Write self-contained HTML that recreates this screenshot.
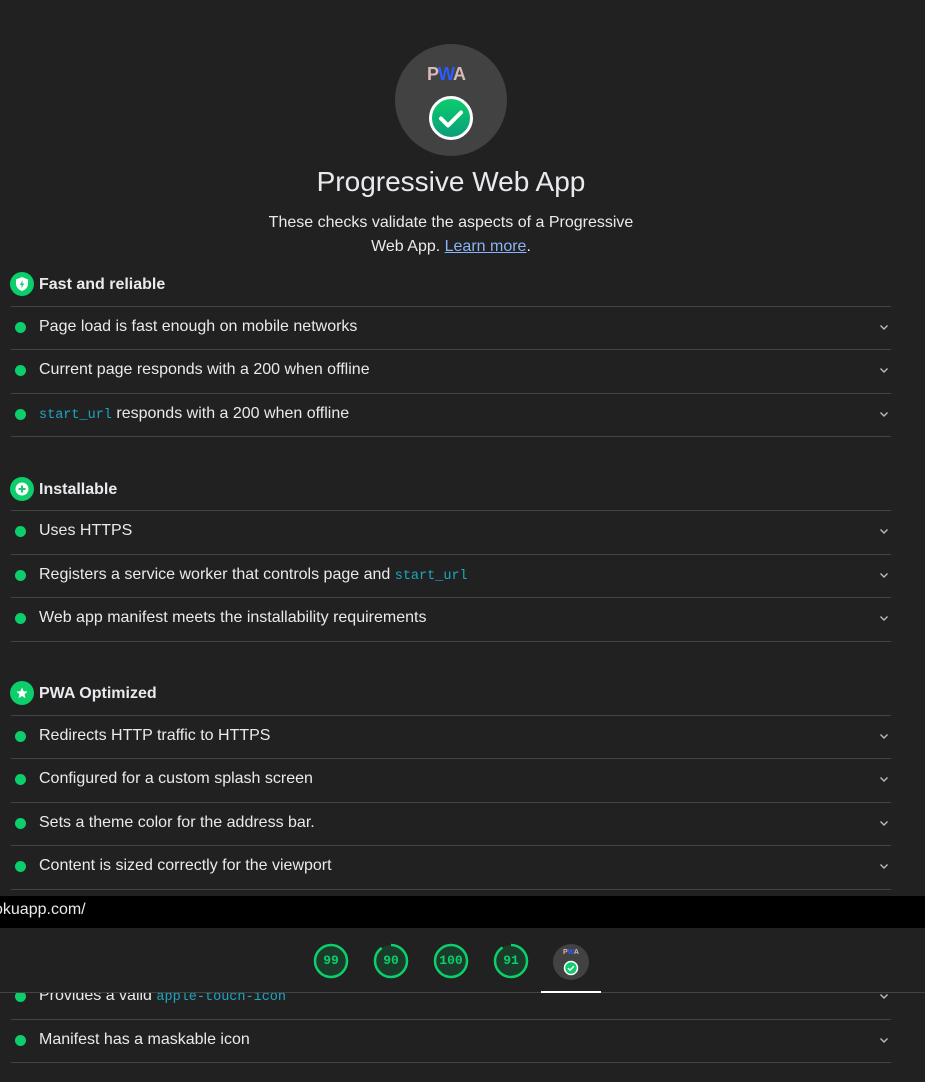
<!DOCTYPE html>
<html><head><style>
body{margin:0;width:925px;height:1082px;background:#212121;color:#e8eaed;font-family:"Liberation Sans",sans-serif;overflow:hidden;position:relative}
.a{position:absolute}
.line{position:absolute;left:11px;width:880px;height:1px;background:#444}
.row{position:absolute;left:0;width:891px;font-size:16px;line-height:20px}
.row .d{position:absolute;left:15px;top:5px;width:11px;height:11px;border-radius:50%;background:#0cce6b}
.row .t{position:absolute;left:39px;top:0;white-space:nowrap}
.row .c{position:absolute;left:879px;top:6px;width:10px;height:8px}
code{font-family:"Liberation Mono",monospace;color:#1ba7c1;font-size:13.5px}
.g{position:absolute;left:10px;font-weight:bold;font-size:16px;line-height:24px}
.g .i{position:absolute;left:0;top:0;width:24px;height:24px;border-radius:50%;background:#0cce6b}
.g span{position:absolute;left:29px;top:1px;white-space:nowrap}
.gauge{position:absolute;top:943px;width:36px;height:36px}
.gauge b{position:absolute;left:0;top:0;width:36px;line-height:36px;text-align:center;font-family:"Liberation Mono",monospace;font-size:13px;color:#0cce6b}
</style></head><body>
<svg width="0" height="0" style="position:absolute"><defs><symbol id="ch" viewBox="0 0 10 8"><path d="M1.5 2.5l3.5 3.5 3.5-3.5" fill="none" stroke="#bbb" stroke-width="1.4"/></symbol></defs></svg>
<div class="a" style="left:395px;top:44px;width:112px;height:112px;border-radius:50%;background:#424242"></div>
<div class="a" style="left:427px;top:64px;font-weight:bold;font-size:18px;letter-spacing:-1px;color:#d8b8b8">P<span style="color:#2a5cff">W</span>A</div>
<svg class="a" style="left:428px;top:95px" width="46" height="46" viewBox="0 0 46 46"><defs><linearGradient id="gr" x1="0" y1="0" x2="0" y2="1"><stop offset="0" stop-color="#0cce6b"/><stop offset="1" stop-color="#0a9c7a"/></linearGradient></defs><circle cx="23" cy="23" r="20.5" fill="url(#gr)" stroke="#fff" stroke-width="3"/><path d="M13 23.5l7 7 13-13" fill="none" stroke="#fff" stroke-width="4" stroke-linecap="round" stroke-linejoin="round"/></svg>
<div class="a" style="left:0;width:902px;top:166px;text-align:center;font-size:28px">Progressive Web App</div>
<div class="a" style="left:0;width:902px;top:211px;text-align:center;font-size:16px;line-height:24px">These checks validate the aspects of a Progressive<br>Web App. <span style="color:#8ab4f8;text-decoration:underline">Learn more</span>.</div>

<div class="g" style="top:272px"><div class="i"><svg width="24" height="24"><path d="M12 5l6 2.5v4c0 4-3 6.5-6 7.5-3-1-6-3.5-6-7.5v-4z" fill="#fff"/><path d="M12.8 8l-3 5h2l-.6 3.5 3-5h-2z" fill="#0cce6b"/></svg></div><span>Fast and reliable</span></div>
<div class="line" style="top:306px"></div>
<div class="row" style="top:317px"><i class="d"></i><span class="t">Page load is fast enough on mobile networks</span><svg class="c"><use href="#ch"/></svg></div>
<div class="line" style="top:349px"></div>
<div class="row" style="top:360px"><i class="d"></i><span class="t">Current page responds with a 200 when offline</span><svg class="c"><use href="#ch"/></svg></div>
<div class="line" style="top:393px"></div>
<div class="row" style="top:404px"><i class="d"></i><span class="t"><code>start_url</code> responds with a 200 when offline</span><svg class="c"><use href="#ch"/></svg></div>
<div class="line" style="top:436px"></div>

<div class="g" style="top:477px"><div class="i"><svg width="24" height="24"><circle cx="12" cy="12" r="6.5" fill="#fff"/><path d="M12 8.5v7M8.5 12h7" stroke="#0cce6b" stroke-width="2"/></svg></div><span>Installable</span></div>
<div class="line" style="top:510px"></div>
<div class="row" style="top:521px"><i class="d"></i><span class="t">Uses HTTPS</span><svg class="c"><use href="#ch"/></svg></div>
<div class="line" style="top:554px"></div>
<div class="row" style="top:565px"><i class="d"></i><span class="t">Registers a service worker that controls page and <code>start_url</code></span><svg class="c"><use href="#ch"/></svg></div>
<div class="line" style="top:597px"></div>
<div class="row" style="top:608px"><i class="d"></i><span class="t">Web app manifest meets the installability requirements</span><svg class="c"><use href="#ch"/></svg></div>
<div class="line" style="top:641px"></div>

<div class="g" style="top:681px"><div class="i"><svg width="24" height="24"><path d="M12 6.5l1.6 3.8 4 .3-3.1 2.6 1 4-3.5-2.2-3.5 2.2 1-4-3.1-2.6 4-.3z" fill="#fff"/></svg></div><span>PWA Optimized</span></div>
<div class="line" style="top:715px"></div>
<div class="row" style="top:726px"><i class="d"></i><span class="t">Redirects HTTP traffic to HTTPS</span><svg class="c"><use href="#ch"/></svg></div>
<div class="line" style="top:758px"></div>
<div class="row" style="top:769px"><i class="d"></i><span class="t">Configured for a custom splash screen</span><svg class="c"><use href="#ch"/></svg></div>
<div class="line" style="top:802px"></div>
<div class="row" style="top:813px"><i class="d"></i><span class="t">Sets a theme color for the address bar.</span><svg class="c"><use href="#ch"/></svg></div>
<div class="line" style="top:845px"></div>
<div class="row" style="top:856px"><i class="d"></i><span class="t">Content is sized correctly for the viewport</span><svg class="c"><use href="#ch"/></svg></div>
<div class="line" style="top:889px"></div>

<div class="row" style="top:986px"><i class="d"></i><span class="t">Provides a valid <code>apple-touch-icon</code></span><svg class="c"><use href="#ch"/></svg></div>
<div class="line" style="top:1019px"></div>
<div class="row" style="top:1030px"><i class="d"></i><span class="t">Manifest has a maskable icon</span><svg class="c"><use href="#ch"/></svg></div>
<div class="line" style="top:1062px"></div>

<div class="a" style="left:0;top:896px;width:925px;height:32px;background:#000;overflow:hidden"><span style="position:absolute;left:-6px;top:5px;font-size:16px;color:#e8eaed">okuapp.com/</span></div>
<div class="a" style="left:0;top:928px;width:925px;height:64px;background:#212121;border-bottom:1px solid #444"></div>
<div class="gauge" style="left:313px"><svg width="36" height="36"><circle cx="18" cy="18" r="16" fill="#1b3a2a" stroke="#0cce6b" stroke-width="2.5"/></svg><b>99</b></div>
<div class="gauge" style="left:373px"><svg width="36" height="36"><circle cx="18" cy="18" r="16" fill="#1b3a2a" stroke="#0cce6b" stroke-width="2.5" stroke-dasharray="90.5 100" transform="rotate(-90 18 18)"/></svg><b>90</b></div>
<div class="gauge" style="left:433px"><svg width="36" height="36"><circle cx="18" cy="18" r="16" fill="#1b3a2a" stroke="#0cce6b" stroke-width="2.5"/></svg><b>100</b></div>
<div class="gauge" style="left:493px"><svg width="36" height="36"><circle cx="18" cy="18" r="16" fill="#1b3a2a" stroke="#0cce6b" stroke-width="2.5" stroke-dasharray="91.5 100" transform="rotate(-90 18 18)"/></svg><b>91</b></div>
<div class="a" style="left:553px;top:944px;width:36px;height:36px;border-radius:50%;background:#424242"></div>
<div class="a" style="left:563px;top:949px;font-size:7px;font-weight:bold;color:#d8b8b8">P<span style="color:#2a5cff">W</span>A</div>
<svg class="a" style="left:563px;top:960px" width="16" height="16"><circle cx="8" cy="8" r="6.5" fill="#0cce6b" stroke="#fff" stroke-width="1.5"/><path d="M5 8.2l2 2 4-4" fill="none" stroke="#fff" stroke-width="1.5"/></svg>
<div class="a" style="left:541px;top:991px;width:60px;height:2px;background:#fff"></div>
</body></html>
